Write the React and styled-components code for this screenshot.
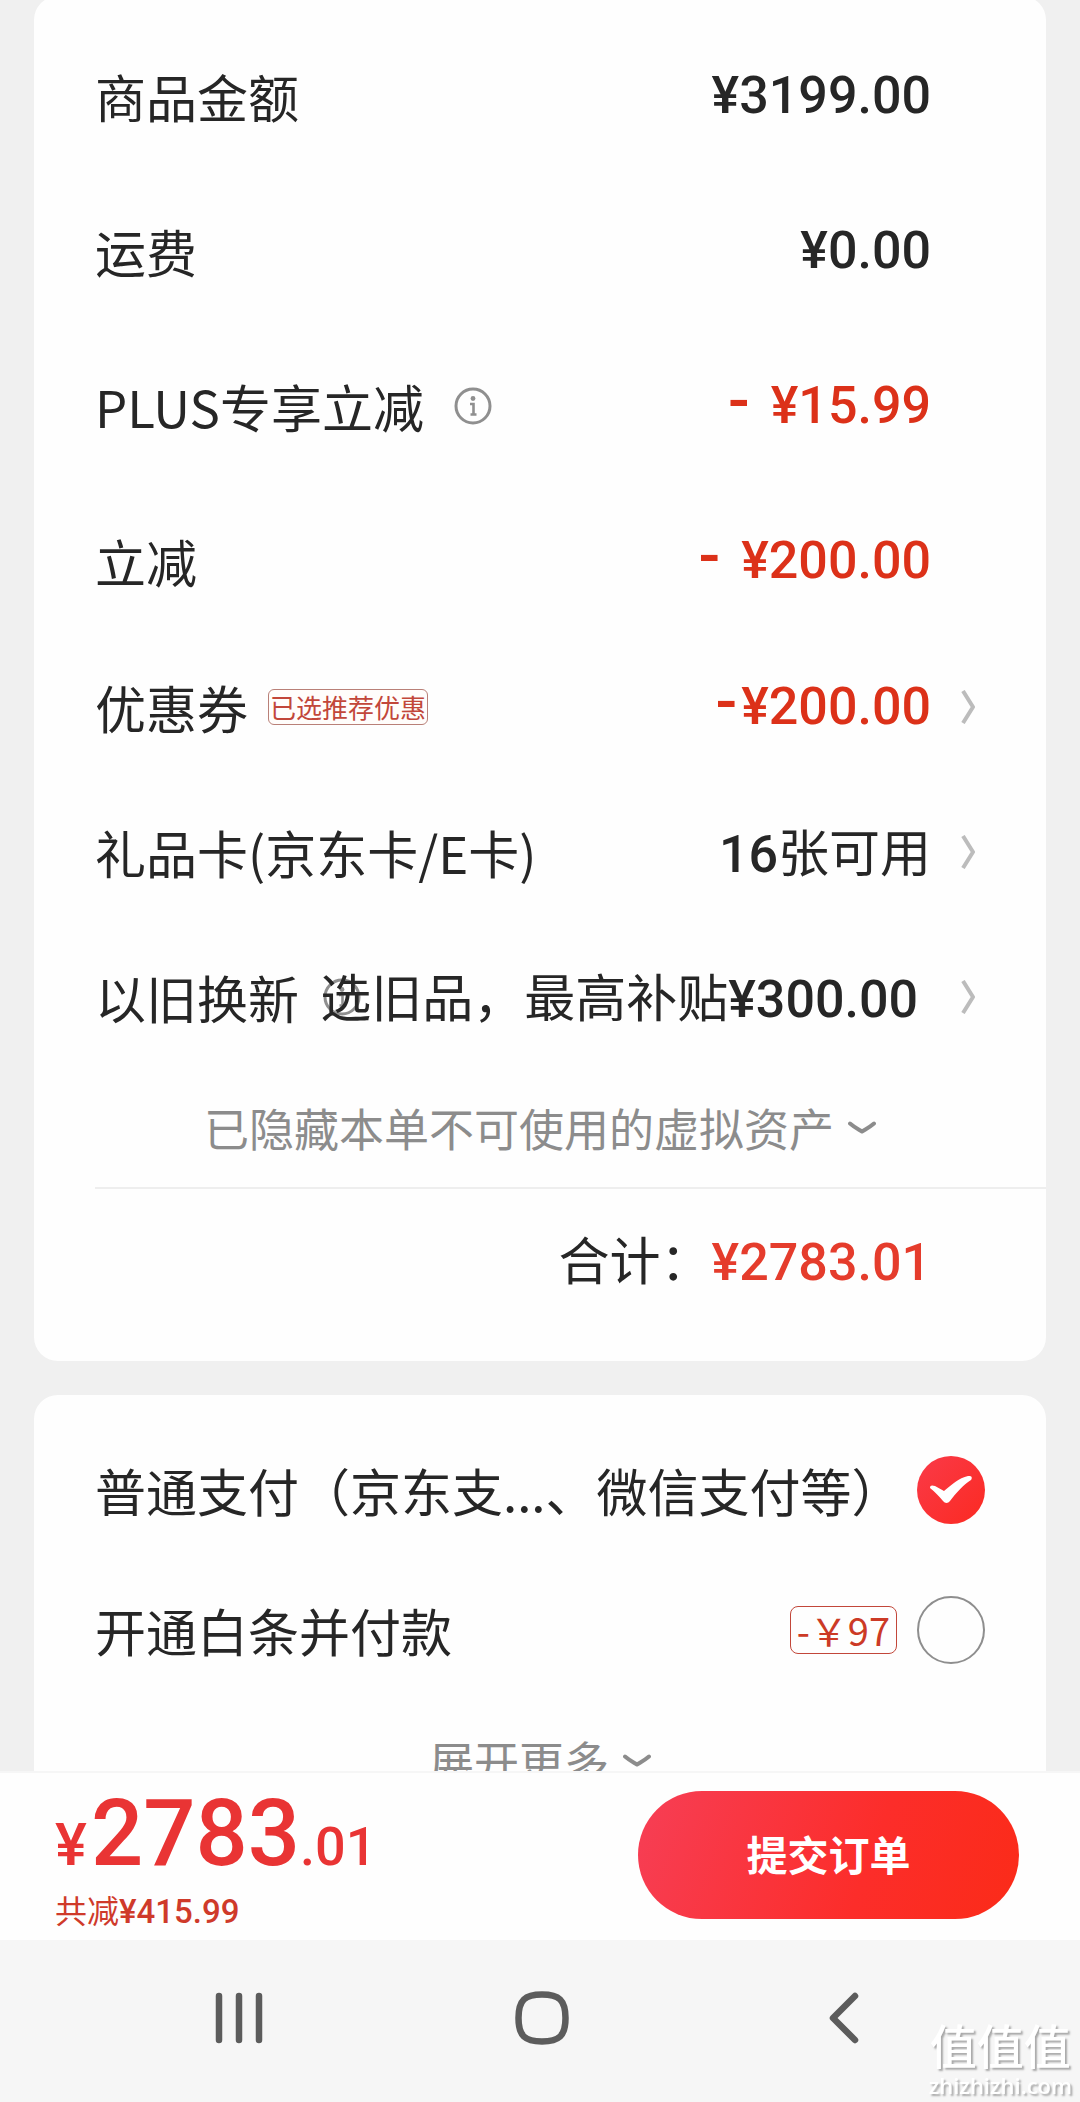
import React, { useState } from 'react';
import styled, { createGlobalStyle, css } from 'styled-components';

const CJK = "'Noto Sans CJK SC', sans-serif";
const DIGITS = "Roboto, 'Noto Sans CJK SC', sans-serif";

const GlobalStyle = createGlobalStyle`
  * { box-sizing: border-box; }
  body {
    margin: 0;
    background: #f0f0f0;
    color: #262626;
    font-family: ${CJK};
  }
  svg { flex: none; }
  button {
    margin: 0;
    padding: 0;
    border: 0;
    background: none;
    color: inherit;
    font: inherit;
    cursor: pointer;
  }
`;

const Screen = styled.div`
  display: flex;
  flex-direction: column;
  height: 100vh;
  overflow: hidden;
`;

const Content = styled.main`
  flex: 1;
  min-height: 0;
  overflow: hidden auto;
  scrollbar-width: none;
  display: flex;
  flex-direction: column;
  gap: 34px;
  padding: 0 34px;
`;

const Card = styled.section`
  flex: none;
  background: #fefefe;
  border-radius: 24px;
`;

const SummaryCard = styled(Card)`
  margin-top: -4px;
  padding: 62px 0 60px 61px;
`;

const PayCard = styled(Card)`
  padding: 57px 61px 60px 61px;
`;

const RowGroup = styled.div`
  display: flex;
  flex-direction: column;
  gap: ${(p) => p.$gap}px;
  margin-bottom: ${(p) => p.$after}px;
`;

const rowLayout = css`
  display: flex;
  align-items: center;
  width: 100%;
  height: 76px;
  padding-right: 71px;
  font-size: 51px;
  line-height: 76px;
  text-align: left;
  white-space: nowrap;
`;

const Row = styled.div`${rowLayout}`;
const LinkRow = styled.button`
  && { ${rowLayout} }
`;

const Label = styled.span`
  flex: 1 1 0;
  min-width: 0;
  display: flex;
  align-items: center;
  gap: ${(p) => p.$gap || 20}px;
`;

const Amount = styled.span`
  font-family: ${DIGITS};
  font-weight: 500;
  font-size: 52px;
  color: ${(p) => (p.$total ? '#e53c2c' : p.$red ? '#dc3119' : 'inherit')};
`;

const Minus = styled.span`
  margin-right: ${(p) => (p.$spaced ? 8 : 4)}px;
  font-size: 64px;
  line-height: 52px;
`;

const Value = styled.span`
  position: relative;
  flex: none;
`;

const ArrowSlot = styled.span`
  flex: none;
  display: flex;
  justify-content: flex-end;
  align-items: center;
  width: 44px;
`;

const CouponTag = styled.span`
  padding: 0 1px;
  border: 1px solid #b98078;
  border-radius: 6px;
  background: #fffdfb;
  color: #c2473a;
  font-size: 26px;
  line-height: 34px;
`;

const MoreButton = styled.button`
  && {
    display: flex;
    align-items: center;
    justify-content: center;
    gap: 14px;
    width: 100%;
    height: 60px;
    padding-right: ${(p) => p.$shift || 0}px;
    color: #8c8c8c;
    font-size: 45px;
    line-height: 60px;
  }
`;

const Total = styled.div`
  display: flex;
  justify-content: flex-end;
  align-items: baseline;
  margin-top: 29px;
  padding: 31px 115px 0 0;
  border-top: 2px solid #eeeeee;
  font-size: 51px;
  line-height: 76px;
`;

const PayOption = styled.label`
  display: flex;
  align-items: center;
  height: 76px;
  margin-bottom: ${(p) => p.$after}px;
  font-size: 51px;
  line-height: 76px;
  white-space: nowrap;
`;

const PayName = styled.span`
  flex: 1;
  min-width: 0;
`;

const PayTag = styled.span`
  margin-right: 20px;
  padding: 0 6px;
  border: 1px solid #c2473a;
  border-radius: 8px;
  color: #cc3a26;
  font-size: 38px;
  line-height: 46px;
`;

const RadioBox = styled.span`
  flex: none;
  display: grid;
  width: 68px;
  height: 68px;
  > * { grid-area: 1 / 1; }
  svg { pointer-events: none; }
`;

const Radio = styled.input`
  appearance: none;
  width: 68px;
  height: 68px;
  margin: 0;
  border: 2px solid #8e8e8e;
  border-radius: 50%;
  &:checked {
    border: 0;
    background: linear-gradient(135deg, #fa3a48, #fb2a22);
  }
`;

const CheckoutBar = styled.footer`
  flex: none;
  display: flex;
  justify-content: space-between;
  align-items: center;
  height: 169px;
  padding: 0 61px 4px 55px;
  border-top: 2px solid #f6f6f6;
  background: #fefefe;
`;

const PriceBlock = styled.div`
  display: flex;
  flex-direction: column;
  gap: 6px;
  padding-top: 12px;
`;

const Price = styled.div`
  color: #e93434;
  font-family: ${DIGITS};
  font-weight: 500;
  font-size: 54px;
  line-height: 40px;
`;

const PriceSign = styled.span`
  margin-right: 4px;
  font-size: 60px;
`;

const PriceMain = styled.span`
  font-size: 92px;
  line-height: 94px;
`;

const Saved = styled.div`
  color: #cf3a2a;
  font-size: 32px;
  line-height: 44px;
`;

const SavedAmount = styled.span`
  font-family: ${DIGITS};
  font-weight: 500;
  font-size: 33px;
`;

const Submit = styled.button`
  && {
    width: 381px;
    height: 128px;
    padding-bottom: 4px;
    border-radius: 64px;
    background: linear-gradient(110deg, #f73d52 5%, #fc2d2a 60%, #fb2b18);
    color: #ffffff;
    font-size: 41px;
    font-weight: 700;
  }
`;

const SystemNav = styled.nav`
  flex: none;
  display: flex;
  justify-content: space-between;
  height: 162px;
  padding: 0 85px 0 88px;
  background: #f6f6f6;
`;

const NavButton = styled.button`
  && {
    display: flex;
    align-items: center;
    justify-content: center;
    width: 302px;
    padding-bottom: 6px;
  }
`;

const Watermark = styled.div`
  position: fixed;
  right: 8px;
  bottom: 3px;
  display: flex;
  flex-direction: column;
  align-items: center;
  color: #ffffff;
  text-shadow: 2px 2px 2px #a8a8a8;
`;

const WatermarkName = styled.span`
  font-size: 47px;
  font-weight: 500;
  line-height: 54px;
`;

const WatermarkSite = styled.span`
  font-family: 'Open Sans', sans-serif;
  font-size: 22px;
  font-weight: 600;
  line-height: 28px;
`;

const InfoIcon = () => (
  <svg width="38" height="38" viewBox="0 0 38 38" fill="none" aria-hidden="true">
    <circle cx="19" cy="19" r="17" stroke="#8f8f8f" strokeWidth="3" />
    <circle cx="19" cy="11.5" r="2.4" fill="#8f8f8f" />
    <path d="M16 17H19.5V27.5M16.500 27.5H22.500" stroke="#8f8f8f" strokeWidth="2.6" />
  </svg>
);

const ArrowRight = () => (
  <ArrowSlot>
    <svg width="14" height="34" viewBox="0 0 14 34" fill="none" aria-hidden="true">
      <path d="M2 1L12 17L2 33" stroke="#bcbcbc" strokeWidth="4" />
    </svg>
  </ArrowSlot>
);

const ArrowDown = () => (
  <svg width="28" height="14" viewBox="0 0 28 14" fill="none" aria-hidden="true">
    <path d="M2 2.5C6 6 10 8 14 10.5C18 8 22 6 26 2.5" stroke="#8c8c8c" strokeWidth="4" strokeLinecap="round" strokeLinejoin="round" />
  </svg>
);

const CheckMark = () => (
  <svg width="68" height="68" viewBox="0 0 68 68" aria-hidden="true">
    <path d="M13 32C13 29 15 29 18 30L27 35C34 29 42 22 51 20C54 19.500 56 21 54 24C46 29 39 37 33 45C31 47.500 28 47.500 26 45C22 40 18 36 13 32Z" fill="#fff" />
  </svg>
);

const priceRows = [
  { label: '商品金额', amount: '¥3199.00' },
  { label: '运费', amount: '¥0.00' },
  { label: 'PLUS专享立减', amount: ' ¥15.99', minus: true, info: true },
  { label: '立减', amount: ' ¥200.00', minus: true },
];

export default function App() {
  const [method, setMethod] = useState('normal');
  return (
    <Screen>
      <GlobalStyle />
      <Content>
        <SummaryCard>
          <RowGroup $gap={79} $after={70}>
            {priceRows.map((row) => (
              <Row key={row.label}>
                <Label $gap={30}>
                  {row.label}
                  {row.info && <InfoIcon />}
                </Label>
                <Amount $red={row.minus}>
                  {row.minus && <Minus $spaced>-</Minus>}
                  {row.amount}
                </Amount>
                <ArrowSlot />
              </Row>
            ))}
          </RowGroup>
          <RowGroup $gap={69} $after={63}>
            <LinkRow type="button">
              <Label>
                优惠券<CouponTag>已选推荐优惠</CouponTag>
              </Label>
              <Amount $red><Minus>-</Minus>¥200.00</Amount>
              <ArrowRight />
            </LinkRow>
            <LinkRow type="button">
              <Label>礼品卡(京东卡/E卡)</Label>
              <Value><Amount>16</Amount>张可用</Value>
              <ArrowRight />
            </LinkRow>
            <LinkRow type="button">
              <Label $gap={24}>以旧换新<InfoIcon /></Label>
              <Value>选旧品，最高补贴<Amount>¥300.00&nbsp;</Amount></Value>
              <ArrowRight />
            </LinkRow>
          </RowGroup>
          <MoreButton type="button" $shift={61}>
            已隐藏本单不可使用的虚拟资产<ArrowDown />
          </MoreButton>
          <Total>
            合计：<Amount $total>¥2783.01</Amount>
          </Total>
        </SummaryCard>

        <PayCard>
          <PayOption $after={64}>
            <PayName>普通支付（京东支...、微信支付等）</PayName>
            <RadioBox>
              <Radio type="radio" name="pay" checked={method === 'normal'} onChange={() => setMethod('normal')} />
              {method === 'normal' && <CheckMark />}
            </RadioBox>
          </PayOption>
          <PayOption $after={63}>
            <PayName>开通白条并付款</PayName>
            <PayTag>-￥97</PayTag>
            <RadioBox>
              <Radio type="radio" name="pay" checked={method === 'baitiao'} onChange={() => setMethod('baitiao')} />
              {method === 'baitiao' && <CheckMark />}
            </RadioBox>
          </PayOption>
          <MoreButton type="button">
            展开更多<ArrowDown />
          </MoreButton>
        </PayCard>
      </Content>

      <CheckoutBar>
        <PriceBlock>
          <Price><PriceSign>¥</PriceSign><PriceMain>2783</PriceMain>.01</Price>
          <Saved>共减<SavedAmount>¥415.99</SavedAmount></Saved>
        </PriceBlock>
        <Submit type="button">提交订单</Submit>
      </CheckoutBar>

      <SystemNav>
        <NavButton type="button" aria-label="最近任务">
          <svg width="50" height="52" viewBox="0 0 50 52" fill="none" stroke="#5c5c5c" strokeWidth="6.500" strokeLinecap="round">
            <path d="M5 4V48M25 4V48M45 4V48" />
          </svg>
        </NavButton>
        <NavButton type="button" aria-label="主屏幕">
          <svg width="54" height="54" viewBox="0 0 54 54" fill="none" stroke="#5c5c5c" strokeWidth="6.500">
            <path d="M27 3.500C44 3.500 50.500 9 50.500 27S44 50.500 27 50.500S3.500 45 3.500 27S10 3.500 27 3.500Z" />
          </svg>
        </NavButton>
        <NavButton type="button" aria-label="返回">
          <svg width="30" height="52" viewBox="0 0 30 52" fill="none" stroke="#5c5c5c" strokeWidth="6.500" strokeLinecap="round" strokeLinejoin="round">
            <path d="M26 4L4 26L26 48" />
          </svg>
        </NavButton>
      </SystemNav>

      <Watermark>
        <WatermarkName>值值值</WatermarkName>
        <WatermarkSite>zhizhizhi.com</WatermarkSite>
      </Watermark>
    </Screen>
  );
}
